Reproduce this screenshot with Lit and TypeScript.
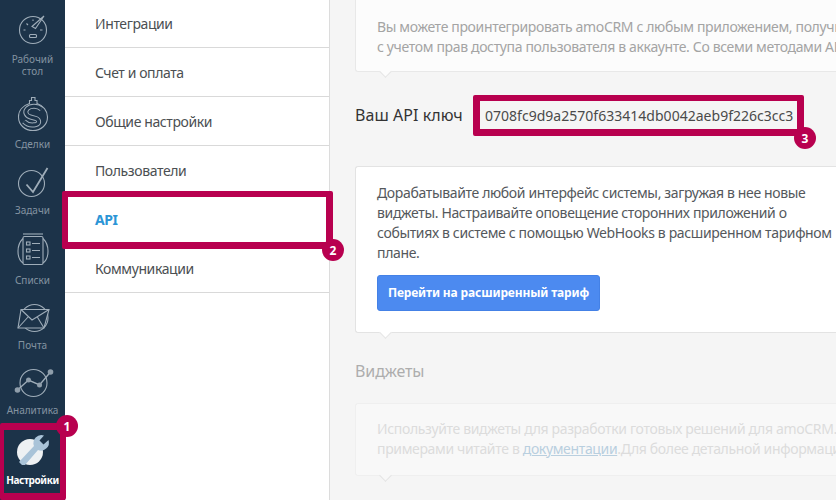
import { LitElement, html, css, svg } from "lit";
import { customElement } from "lit/decorators.js";

const icons: Record<string, unknown> = {
  dash: svg`<circle cx="16" cy="17" r="13.5"/><path d="M6.500 17h2M9.500 10.500l1.500 1.500M16 6.500v1.500M23 17h2.500"/><path d="M27 3 L18.500 15.500 L15 13.500 Z"/><rect x="12.500" y="21.500" width="7" height="3" rx="1"/>`,
  deal: svg`<path d="M12.500 6.500 V3.500 H14.500 V0.500 H18 V3.500 H20 V6.500 C26 8.500 30.500 13.500 30.500 20 C30.500 28 24 33.500 16 33.500 C8 33.500 1.500 28 1.500 20 C1.500 13.500 6 8.500 12.500 6.500 Z"/><path class="s1" d="M24.500 12 C20.500 8.500 13.500 8.500 10.500 11.500 C7 15 9.500 19 13.500 20 L19 21.500 C22.500 23 22.500 26.500 19 27.500 C15 28.500 10 27.500 7 24.500"/><path class="s2" d="M24.500 12 C20.500 8.500 13.500 8.500 10.500 11.500 C7 15 9.500 19 13.500 20 L19 21.500 C22.500 23 22.500 26.500 19 27.500 C15 28.500 10 27.500 7 24.500"/>`,
  task: svg`<circle cx="14.500" cy="17.500" r="13"/><path d="M9.500 18.500 L16 26 L30.500 2" stroke-width="1.800"/>`,
  list: svg`<path d="M6 5.500 C2.500 9 1 14 1 18 C1 23 3 28 6 30"/><path d="M26 5.500 C29.500 9 31 14 31 18 C31 23 29 28 26 30"/><rect x="6" y="3.500" width="20" height="28" rx="1.500"/><path d="M6 1 H26"/><rect x="9.500" y="9" width="3.500" height="3"/><rect x="9.500" y="16" width="3.500" height="3"/><rect x="9.500" y="23" width="3.500" height="3"/><path d="M15 10.500 H23 M15 17.500 H23 M15 24.500 H23"/>`,
  mail: svg`<circle cx="17.500" cy="17" r="13.500"/><path d="M4 8.500 H32 L27 27 H1 Z" fill="#1c3349"/><path d="M4 8.500 L15 19 L32 8.500 M1 27 L11.500 15.500 M27 27 L20 15.500"/>`,
  chart: svg`<circle cx="16.500" cy="17" r="13.500"/><path d="M0.500 24 L11.500 14 L22.500 19 L33.500 6" stroke-width="1.400"/><circle cx="0.500" cy="24" r="2.800" class="f"/><circle cx="11.500" cy="14" r="2.500" class="f"/><circle cx="22.500" cy="19" r="2.500" class="f"/><circle cx="33.500" cy="6" r="2.800" class="f"/>`,
};

const navItems = [
  { label: ["Рабочий", "стол"], icon: "dash", h: 77, top: 13, gap: 6 },
  { label: ["Сделки"], icon: "deal", h: 73, top: 20, gap: 7 },
  { label: ["Задачи"], icon: "task", h: 66, top: 16, gap: 4 },
  { label: ["Списки"], icon: "list", h: 70, top: 17, gap: 7 },
  { label: ["Почта"], icon: "mail", h: 65, top: 15, gap: 4 },
  { label: ["Аналитика"], icon: "chart", h: 65, top: 15, gap: 4 },
];

const menu = ["Интеграции", "Счет и оплата", "Общие настройки", "Пользователи", "API", "Коммуникации"];

@customElement("app-root")
export class AppRoot extends LitElement {
  static styles = css`
    :host {
      display: block;
      width: 836px;
      height: 500px;
      overflow: hidden;
      font-family: "Noto Sans", "Open Sans", sans-serif;
    }
    .page {
      display: grid;
      grid-template-columns: 65px 265px 1fr;
      height: 500px;
      position: relative;
      overflow: hidden;
    }
    .side {
      background: #1c3349;
      display: flex;
      flex-direction: column;
    }
    .nav {
      display: flex;
      flex-direction: column;
      align-items: center;
      color: #8493a1;
      font-size: 10px;
      line-height: 12px;
      box-sizing: border-box;
      flex: none;
    }
    .nav svg {
      width: 32px;
      height: 34px;
      fill: none;
      stroke: #9fadb9;
      stroke-width: 1.100;
      flex: none;
      overflow: visible;
    }
    .nav svg .f { fill: #8f9eab; stroke: none; }
    .nav svg .s1 { stroke-width: 5; stroke: #9fadb9; }
    .nav svg .s2 { stroke-width: 3; stroke: #1c3349; }
    .nav svg .disc { fill: #eef1f3; stroke: none; }
    .nav svg .wrench { fill: #a9c3d8; stroke: none; }
    .nav .lbl { text-align: center; }
    .nav.active {
      color: #fff;
      font-weight: 700;
      letter-spacing: -0.400px;
      flex: 1;
      padding-top: 18px;
    }
    .nav.active .lbl { margin-top: 6px; }
    .menu {
      background: #fff;
      border-right: 1px solid #dcdcdc;
      display: flex;
      flex-direction: column;
      box-sizing: border-box;
    }
    .menu .row {
      height: 49px;
      flex: none;
      box-sizing: border-box;
      border-bottom: 1px solid #d9d9d9;
      padding-left: 30px;
      font-size: 14px;
      color: #4b4f52;
      display: flex;
      align-items: center;
      letter-spacing: -0.400px;
    }
    .menu .row:first-child { height: 48px; }
    .menu .row.sel { color: #2b95d6; font-weight: 700; letter-spacing: -0.500px; }
    .main {
      background: #f5f5f5;
      padding-left: 25px;
      display: flex;
      flex-direction: column;
      white-space: nowrap;
      overflow: hidden;
    }
    .card {
      position: relative;
      background: #fff;
      border: 1px solid #e3e3e3;
      border-right: none;
      border-radius: 3px 0 0 3px;
      padding-left: 21px;
      font-size: 14px;
      line-height: 20px;
      box-sizing: border-box;
      letter-spacing: -0.350px;
      flex: none;
    }
    .card::after {
      content: "";
      position: absolute;
      left: 25px;
      bottom: -5px;
      width: 8px;
      height: 8px;
      background: inherit;
      border-right: 1px solid #e3e3e3;
      border-bottom: 1px solid #e3e3e3;
      transform: rotate(45deg);
    }
    .c1 {
      height: 72px;
      padding-top: 17px;
      border-top: none;
      border-radius: 0 0 0 3px;
      color: #a4a4a4;
      background: #fcfcfc;
      border-color: #e8e8e8;
    }
    .key {
      display: flex;
      align-items: center;
      height: 28px;
      margin-top: 29px;
      flex: none;
    }
    .key .t { font-size: 16px; color: #333; width: 130px; letter-spacing: 0.050px; flex: none; }
    .key .v { font-size: 14px; color: #4a4a4a; letter-spacing: 0.020px; }
    .c2 {
      margin-top: 37px;
      height: 167px;
      padding-top: 16px;
      color: #54585c;
    }
    .btn {
      margin-top: 12px;
      width: 223px;
      height: 36px;
      background: #4c8af0;
      border: 1px solid #4481e6;
      border-radius: 3px;
      box-sizing: border-box;
      color: #fff;
      font-weight: 700;
      font-size: 12px;
      display: flex;
      align-items: center;
      justify-content: center;
      letter-spacing: -0.150px;
    }
    .h {
      margin-top: 27px;
      font-size: 16px;
      line-height: 22px;
      color: #adadad;
      letter-spacing: -0.100px;
      flex: none;
    }
    .c3 {
      margin-top: 21px;
      height: 73px;
      padding-top: 15px;
      color: #dcdcdc;
      background: #f8f8f8;
      border-color: #efefef;
    }
    .c3 a { color: #b9cfdf; }
    .mark {
      position: absolute;
      border: 7px solid #b8004f;
      border-radius: 2px;
      box-sizing: border-box;
      pointer-events: none;
    }
    .m1 { left: 0; top: 423px; width: 66px; height: 77px; border-width: 7px 6px 7px 4px; }
    .m2 { left: 62px; top: 191px; width: 271px; height: 58px; border-width: 6px 7px 7px 6px; }
    .m3 { left: 473px; top: 95px; width: 331px; height: 41px; border-width: 6px 7px 7px 7px; }
    .badge {
      position: absolute;
      width: 22px;
      height: 22px;
      border-radius: 50%;
      background: #b8004f;
      color: #fff;
      font-size: 12px;
      font-weight: 700;
      display: flex;
      align-items: center;
      justify-content: center;
    }
    .b1 { left: 56px; top: 415px; }
    .b2 { left: 322px; top: 239px; }
    .b3 { left: 794px; top: 127px; }
  `;

  render() {
    return html`
      <div class="page">
        <aside class="side">
          ${navItems.map(
            (n) => html`<div class="nav" style="height:${n.h}px;padding-top:${n.top}px">
              <svg viewBox="0 0 32 34">${icons[n.icon]}</svg>
              <div class="lbl" style="margin-top:${n.gap}px">${n.label.map((l) => html`${l}<br />`)}</div>
            </div>`
          )}
          <div class="nav active">
            <svg viewBox="0 0 32 34">
              <circle class="disc" cx="13" cy="18" r="13"></circle>
              <path class="wrench" d="M5 31 L2 28 L17 12 A8 8 0 0 1 27 1.500 L22.500 6.500 L26.500 10.500 L31.500 6 A8 8 0 0 1 21 16 L8 31 Z"></path>
            </svg>
            <div class="lbl">Настройки</div>
          </div>
        </aside>
        <nav class="menu">
          ${menu.map((m) => html`<div class="row ${m === "API" ? "sel" : ""}">${m}</div>`)}
        </nav>
        <main class="main">
          <section class="card c1">
            Вы можете проинтегрировать amoCRM с любым приложением, получив доступ<br />
            с учетом прав доступа пользователя в аккаунте. Со всеми методами API
          </section>
          <div class="key">
            <span class="t">Ваш API ключ</span>
            <span class="v">0708fc9d9a2570f633414db0042aeb9f226c3cc3</span>
          </div>
          <section class="card c2">
            Дорабатывайте любой интерфейс системы, загружая в нее новые<br />
            виджеты. Настраивайте оповещение сторонних приложений о<br />
            событиях в системе с помощью WebHooks в расширенном тарифном<br />
            плане.
            <div class="btn">Перейти на расширенный тариф</div>
          </section>
          <div class="h">Виджеты</div>
          <section class="card c3">
            Используйте виджеты для разработки готовых решений для amoCRM. С<br />
            примерами читайте в <a href="#">документации</a>.Для более детальной информации
          </section>
        </main>
        <div class="mark m1"></div>
        <div class="mark m2"></div>
        <div class="mark m3"></div>
        <div class="badge b1">1</div>
        <div class="badge b2">2</div>
        <div class="badge b3">3</div>
      </div>
    `;
  }
}
